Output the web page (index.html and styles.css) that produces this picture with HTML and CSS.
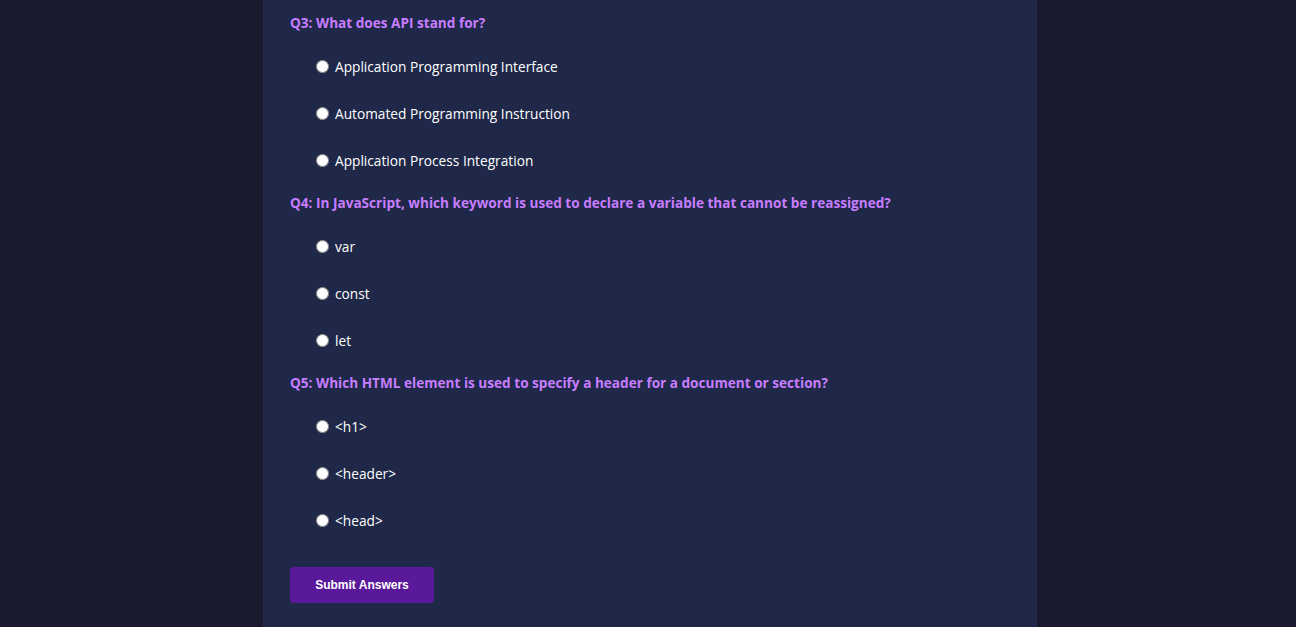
FILE: index.html
```html
<!DOCTYPE html>
<html lang="en">
<head>
<meta charset="utf-8">
<title>Quiz</title>
<link rel="stylesheet" href="styles.css">
</head>
<body>
<main class="quiz">
  <form class="quiz-form">
    <section class="question">
      <h3 class="question-title">Q3: What does API stand for?</h3>
      <label class="option"><input type="radio" name="q3"><span>Application Programming Interface</span></label>
      <label class="option"><input type="radio" name="q3"><span>Automated Programming Instruction</span></label>
      <label class="option"><input type="radio" name="q3"><span>Application Process Integration</span></label>
    </section>
    <section class="question">
      <h3 class="question-title">Q4: In JavaScript, which keyword is used to declare a variable that cannot be reassigned?</h3>
      <label class="option"><input type="radio" name="q4"><span>var</span></label>
      <label class="option"><input type="radio" name="q4"><span>const</span></label>
      <label class="option"><input type="radio" name="q4"><span>let</span></label>
    </section>
    <section class="question">
      <h3 class="question-title">Q5: Which HTML element is used to specify a header for a document or section?</h3>
      <label class="option"><input type="radio" name="q5"><span>&lt;h1&gt;</span></label>
      <label class="option"><input type="radio" name="q5"><span>&lt;header&gt;</span></label>
      <label class="option"><input type="radio" name="q5"><span>&lt;head&gt;</span></label>
    </section>
    <button type="button" class="submit">Submit Answers</button>
  </form>
</main>
</body>
</html>
```

FILE: styles.css
```css
html, body {
  margin: 0;
  background: #1a1a2e;
  height: 100%;
}
body {
  padding: 0 0 0 4px;
  box-sizing: border-box;
  font-family: "Open Sans", "Noto Sans", sans-serif;
  color: #ffffff;
}
.quiz {
  width: 774px;
  margin: 0 auto;
  min-height: 100%;
  box-sizing: border-box;
  background: #1f2848;
  padding: 13px 27px 24px;
}
.quiz-form {
  display: flex;
  flex-direction: column;
}
.question {
  display: flex;
  flex-direction: column;
  margin-bottom: 9px;
}
.question-title {
  margin: 0 0 10px;
  font-size: 13.6px;
  line-height: 20px;
  font-weight: 700;
  color: #c77dff;
}
.option {
  display: flex;
  align-items: center;
  height: 47px;
  padding-left: 26px;
  font-size: 13.7px;
  color: #ffffff;
}
.option input {
  width: 13px;
  height: 13px;
  margin: 0 6px 0 0;
}
.submit {
  align-self: flex-start;
  margin-top: 14px;
  width: 144px;
  height: 36px;
  border: none;
  border-radius: 4px;
  background: #5a189a;
  color: #ffffff;
  font-family: "Liberation Sans", Arial, sans-serif;
  font-weight: 700;
  font-size: 12px;
}
```
